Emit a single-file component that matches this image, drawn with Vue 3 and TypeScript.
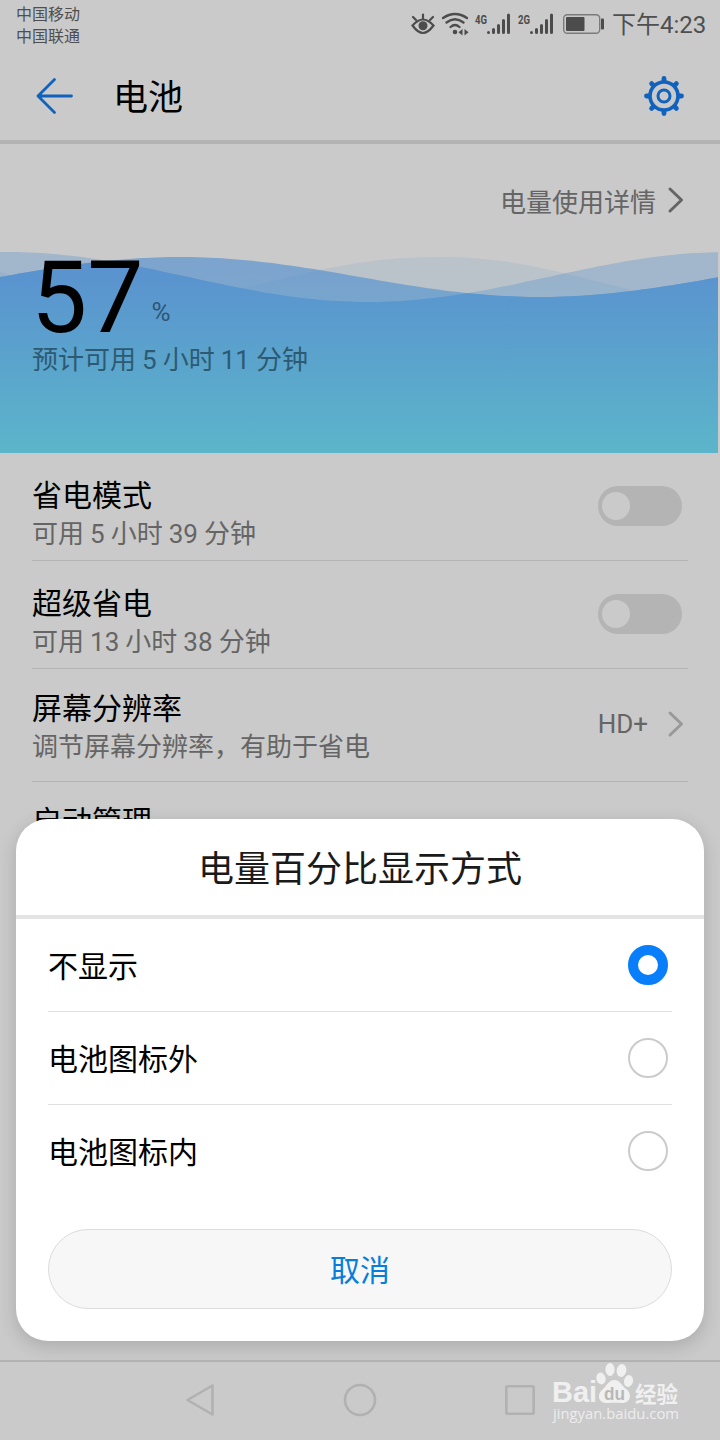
<script setup lang="ts">
import { ref } from 'vue'

interface PowerRow {
  title: string
  note?: string
  kind: 'switch' | 'link'
  value?: string
}

const rows: PowerRow[] = [
  { title: '省电模式', note: '可用 5 小时 39 分钟', kind: 'switch' },
  { title: '超级省电', note: '可用 13 小时 38 分钟', kind: 'switch' },
  { title: '屏幕分辨率', note: '调节屏幕分辨率，有助于省电', kind: 'link', value: 'HD+' },
  { title: '启动管理', kind: 'link' },
]

const options = ['不显示', '电池图标外', '电池图标内']
const selected = ref(0)

// Closed shape whose upper edge is a sine-like wave, sampled every 6px.
function wave(edge: (x: number) => number): string {
  let d = 'M0 201'
  for (let x = 0; x <= 720; x += 6) d += `L${x} ${edge(x).toFixed(2)}`
  return d + 'L720 201Z'
}
const turn = (Math.PI * 2) / 720
const mainWave = wave((x) => 25 - 20 * Math.sin(x * turn))
const backWave = wave((x) => 25 - 25 * Math.cos((x - 8) * turn))
const faintWave = 'M0 20C50 37 95 45 150 45C265 45 310 5 440 5C540 5 600 36 660 42Q690 45 720 45V201H0Z'
</script>

<template>
  <div class="phone">
    <header class="status">
      <div class="carriers"><span>中国移动</span><span>中国联通</span></div>
      <div class="indicators">
        <svg width="196" height="26" viewBox="0 0 196 26">
          <g fill="none" stroke="#4c4c4c" stroke-width="2.200" stroke-linecap="round">
            <path d="M2.500 15.500Q8 9.500 13 9.500Q18 9.500 23.500 15.500Q18 23 13 23Q8 23 2.500 15.500Z" />
            <path d="M13 8.500V4.500M6 10L3 7M20 10L23 7" />
            <path d="M33 8Q45 0 57 8M36.500 12.500Q45 6 53.500 12.500M40.500 17Q45 13 49.500 17" stroke-width="2.300" />
          </g>
          <g fill="#4c4c4c">
            <circle cx="13" cy="15.800" r="4.500" />
            <circle cx="45" cy="22" r="2.300" />
            <path d="M52.500 19V25.500L48.500 22.200ZM54.500 19V25.500L58.500 22.200Z" />
          </g>
          <g stroke="#4c4c4c" stroke-width="3" stroke-linecap="round">
            <path d="M78.500 22.500V22.600M83.500 22.500V19.500M88.500 22.500V15.500M93.500 22.500V10.500M98.500 22.500V5" />
            <path d="M121.500 22.500V22.600M126.500 22.500V19.500M131.500 22.500V15.500M136.500 22.500V10.500M141.500 22.500V5" />
          </g>
          <text x="65" y="13.500" class="net" textLength="12" lengthAdjust="spacingAndGlyphs">4G</text>
          <text x="108" y="13.500" class="net" textLength="12" lengthAdjust="spacingAndGlyphs">2G</text>
          <rect x="153.700" y="4.700" width="36" height="18.600" rx="3.500" fill="none" stroke="#7b7b7b" stroke-width="1.400" />
          <rect x="156" y="7" width="18.500" height="14" rx="1" fill="#4c4c4c" />
          <rect x="191" y="8.500" width="3" height="11" rx="1" fill="#4c4c4c" />
        </svg>
        <span class="clock">下午4:23</span>
      </div>
    </header>

    <nav class="toolbar">
      <svg class="back" width="40" height="40" viewBox="0 0 40 40">
        <path d="M20.500 3.500L4 20L20.500 36.500M4 20H37.500" />
      </svg>
      <h1>电池</h1>
      <svg class="gear" width="42" height="42" viewBox="0 0 42 42">
        <g stroke="#1062bd" stroke-width="4.800" stroke-linecap="round">
          <path d="M21 3.500V7M21 35V38.500M3.500 21H7M35 21H38.500M8.600 8.600L11 11M31 31L33.400 33.400M8.600 33.400L11 31M31 11L33.400 8.600" />
        </g>
        <circle cx="21" cy="21" r="14" fill="#cacaca" stroke="#1062bd" stroke-width="3.600" />
        <circle cx="21" cy="21" r="6" fill="none" stroke="#1062bd" stroke-width="3" />
      </svg>
    </nav>

    <section class="hero">
      <svg class="waves" width="718" height="201" viewBox="0 0 718 201">
        <defs>
          <linearGradient id="water" gradientUnits="userSpaceOnUse" x1="0" y1="20" x2="0" y2="201">
            <stop offset="0" stop-color="#5892cf" />
            <stop offset="1" stop-color="#5ab5ca" />
          </linearGradient>
          <clipPath id="under"><path :d="backWave" /></clipPath>
        </defs>
        <path :d="faintWave" fill="#5892cf" opacity="0.130" />
        <path :d="backWave" fill="url(#water)" opacity="0.350" />
        <path :d="mainWave" fill="url(#water)" opacity="0.680" />
        <path :d="mainWave" fill="url(#water)" opacity="0.920" clip-path="url(#under)" />
      </svg>
      <div class="details">
        <span>电量使用详情</span>
        <svg width="18" height="28" viewBox="0 0 18 28"><path d="M3 3L14.500 14L3 25" /></svg>
      </div>
      <div class="level"><strong>57</strong><span>%</span></div>
      <p class="estimate">预计可用 5 小时 11 分钟</p>
    </section>

    <main class="list">
      <div v-for="row in rows" :key="row.title" class="row" :class="row.kind">
        <div class="label">
          <div class="title">{{ row.title }}</div>
          <div v-if="row.note" class="note">{{ row.note }}</div>
        </div>
        <span v-if="row.kind === 'switch'" class="toggle"><i></i></span>
        <div v-else-if="row.value" class="value">
          <span>{{ row.value }}</span>
          <svg width="18" height="28" viewBox="0 0 18 28"><path d="M3 3L14.500 14L3 25" /></svg>
        </div>
      </div>
    </main>

    <footer class="keys">
      <svg width="40" height="40" viewBox="0 0 40 40"><path d="M32.500 5.500V34.500L7.500 20Z" /></svg>
      <svg width="40" height="40" viewBox="0 0 40 40"><circle cx="20" cy="20" r="15" /></svg>
      <svg width="40" height="40" viewBox="0 0 40 40"><rect x="6.300" y="6.300" width="27.400" height="27.400" rx="1.500" /></svg>
    </footer>

    <div class="dialog">
      <h2>电量百分比显示方式</h2>
      <ul>
        <li v-for="(option, i) in options" :key="option" @click="selected = i">
          <span>{{ option }}</span>
          <i class="radio" :class="{ on: selected === i }"></i>
        </li>
      </ul>
      <button type="button">取消</button>
    </div>

    <svg class="mark" width="136" height="64" viewBox="0 0 136 64">
      <g fill="#f0f0f0">
        <text x="1" y="40" class="brand" textLength="45" lengthAdjust="spacingAndGlyphs">Bai</text>
        <ellipse cx="50" cy="16.500" rx="4.600" ry="6" transform="rotate(-12 50 16.500)" />
        <ellipse cx="59" cy="7.500" rx="4.600" ry="6.500" />
        <ellipse cx="70.500" cy="8.500" rx="4.800" ry="6.500" transform="rotate(12 70.500 8.500)" />
        <ellipse cx="77.500" cy="19" rx="4.500" ry="6" transform="rotate(12 77.500 19)" />
        <path d="M63.500 18C69 18 71 24 75 27C81 31 80.500 41 71 41C67 41 62 40.500 58 41C47 42 46 33 50.500 28.500C55 25 57 18 63.500 18Z" />
        <text x="84" y="39.500" class="cn" textLength="43" lengthAdjust="spacingAndGlyphs">经验</text>
      </g>
      <text x="53" y="38" class="du" textLength="21" lengthAdjust="spacingAndGlyphs">du</text>
      <text x="2" y="57" class="site" textLength="126" lengthAdjust="spacingAndGlyphs">jingyan.baidu.com</text>
    </svg>
  </div>
</template>

<style>
body {
  margin: 0;
}
</style>

<style scoped>
.phone {
  position: relative;
  width: 720px;
  height: 1440px;
  overflow: hidden;
  display: flex;
  flex-direction: column;
  background: #cacaca;
  color: #000;
  font-family: Roboto, 'Noto Sans CJK SC', sans-serif;
}
h1,
h2,
p,
ul {
  margin: 0;
  padding: 0;
  font-weight: 400;
}
.status {
  height: 48px;
  flex: none;
  box-sizing: border-box;
  padding: 3px 16px 0;
  display: flex;
  justify-content: space-between;
  color: #4f4f4f;
}
.carriers {
  display: flex;
  flex-direction: column;
  padding-top: 1px;
  font-size: 16px;
  line-height: 22px;
}
.indicators {
  display: flex;
  align-items: flex-start;
  gap: 6px;
  padding-top: 7px;
}
.clock {
  font-size: 24px;
  line-height: 30px;
  width: 92px;
  white-space: nowrap;
}
.net {
  font: 700 13px Roboto, sans-serif;
  fill: #4c4c4c;
}
.toolbar {
  height: 92px;
  flex: none;
  border-bottom: 4px solid #b3b3b3;
  display: flex;
  align-items: center;
  padding: 0 35px 0 34px;
}
.back path {
  fill: none;
  stroke: #1062bd;
  stroke-width: 2.8;
  stroke-linecap: round;
  stroke-linejoin: round;
}
.back {
  margin-top: 4px;
}
.toolbar h1 {
  flex: 1;
  margin: 9px 0 0 39px;
  font-size: 35px;
  line-height: 44px;
}
.gear {
  margin-top: 4px;
}
.hero {
  position: relative;
  height: 309px;
  flex: none;
}
.waves {
  position: absolute;
  left: 0;
  bottom: 0;
}
.details {
  display: flex;
  justify-content: flex-end;
  align-items: center;
  gap: 11px;
  padding: 36px 35px 0 0;
  height: 40px;
  font-size: 26px;
  color: #656565;
}
.details path,
.value path {
  fill: none;
  stroke: #656565;
  stroke-width: 3;
  stroke-linecap: round;
  stroke-linejoin: round;
}
.level {
  position: relative;
  display: flex;
  align-items: baseline;
  gap: 8px;
  height: 94px;
  margin-top: 28px;
  padding-left: 31px;
}
.level strong {
  font-size: 100px;
  line-height: 100px;
  font-weight: 400;
}
.level span {
  font-size: 26px;
  color: #2d5777;
  position: relative;
  top: -11px;
}
.estimate {
  position: relative;
  padding-left: 32px;
  margin-top: -1px;
  font-size: 26px;
  line-height: 38px;
  word-spacing: -0.4px;
  color: #2d5a72;
}
.list {
  flex: 1;
  overflow: hidden;
  padding: 0 32px;
}
.row {
  height: 107px;
  display: flex;
  justify-content: space-between;
  border-bottom: 1px solid #b4b4b4;
}
.label {
  padding-top: 24px;
}
.title {
  font-size: 30px;
  line-height: 38px;
}
.note {
  font-size: 26px;
  line-height: 38px;
  word-spacing: -0.4px;
  color: #656565;
}
.link {
  height: 112px;
}
.link .label {
  padding-top: 21px;
}
.toggle {
  width: 84px;
  height: 40px;
  border-radius: 20px;
  background: #b4b4b4;
  margin: 33px 6px 0 0;
  box-sizing: border-box;
  padding: 6px 4px;
}
.toggle i {
  display: block;
  width: 28px;
  height: 28px;
  border-radius: 50%;
  background: #cacaca;
}
.value {
  display: flex;
  align-items: center;
  gap: 19px;
  margin-right: 3px;
  padding-bottom: 2px;
  font-size: 26px;
  color: #656565;
}
.value path {
  stroke: #999;
}
.keys {
  height: 76px;
  padding-bottom: 2px;
  flex: none;
  border-top: 2px solid #b3b3b3;
  display: flex;
  justify-content: center;
  align-items: center;
  gap: 120px;
}
.keys svg {
  fill: none;
  stroke: #b1b1b1;
  stroke-width: 2.6;
  stroke-linejoin: round;
}
.dialog {
  position: absolute;
  left: 16px;
  top: 819px;
  width: 688px;
  height: 522px;
  border-radius: 32px;
  background: #fff;
  box-shadow: 0 5px 18px rgba(0, 0, 0, 0.16);
}
.dialog h2 {
  height: 96px;
  border-bottom: 4px solid #e4e4e4;
  font-size: 36px;
  line-height: 103px;
  text-align: center;
  color: #1a1a1a;
}
.dialog ul {
  list-style: none;
  padding: 0 32px;
}
.dialog li {
  height: 92px;
  display: flex;
  align-items: center;
  justify-content: space-between;
  padding-right: 4px;
  border-bottom: 1px solid #e0e0e0;
  font-size: 30px;
}
.dialog li span {
  padding-bottom: 2px;
}
.dialog li:last-child {
  border-bottom-color: transparent;
}
.radio {
  width: 40px;
  height: 40px;
  box-sizing: border-box;
  border-radius: 50%;
  border: 2px solid #cbcbcb;
}
.radio.on {
  border: 10px solid #087efb;
}
.dialog button {
  display: block;
  width: 624px;
  height: 80px;
  margin: 31px 32px 0;
  padding: 0 0 3px;
  border: 1px solid #dcdcdc;
  border-radius: 40px;
  background: #f7f7f7;
  color: #087dd9;
  font-family: inherit;
  font-size: 30px;
}
.mark {
  position: absolute;
  left: 551px;
  top: 1362px;
}
.brand {
  font: 700 29px 'Liberation Sans', sans-serif;
}
.cn {
  font: 700 22px 'Noto Sans CJK SC', sans-serif;
}
.du {
  font: 700 19px 'Liberation Sans', sans-serif;
  fill: #b8b8b8;
}
.site {
  font: 400 14px 'Open Sans', sans-serif;
  fill: #ededed;
}
</style>
